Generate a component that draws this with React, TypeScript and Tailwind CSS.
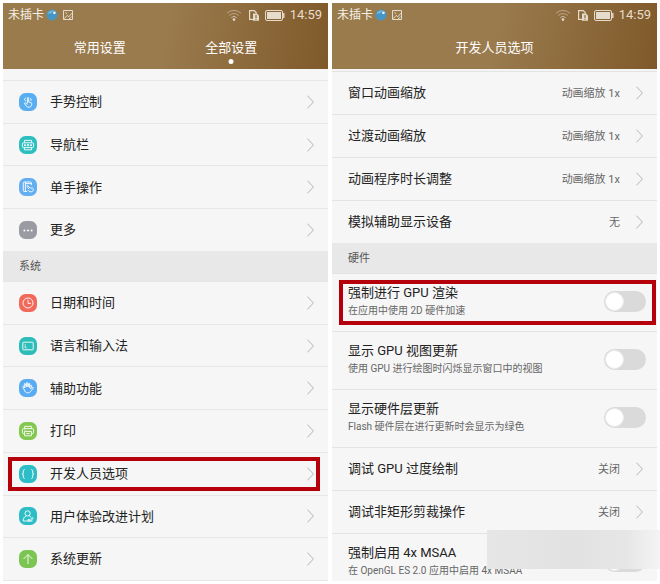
import React from 'react';

const tiles = {
  gesture: {
    color: '#58aef0',
    art: (
      <>
        <path d="M8.4 10.4V5.2c0-.9 1.3-.9 1.3 0v3.7l2.3.8c.7.2 1 .8.8 1.5l-.5 1.6c-.3.8-.9 1.3-1.7 1.3H9c-.6 0-1-.2-1.4-.7l-2-2.6c-.4-.6.3-1.2.9-.8l1.9 1.4" />
        <path d="M6.9 8.2c-1.6-.8-1.7-2.6-.2-3.6M11.4 5.2c.9.8 1 2 .2 2.8" />
      </>
    ),
  },
  navbar: {
    color: '#2dbfc0',
    art: (
      <>
        <path d="M5.4 6.8V4.4h7.2v2.4M5.4 11.6v2.2h7.2v-2.2" />
        <rect x="3.4" y="6.8" width="11.2" height="4.8" rx="1.2" />
        <path d="M5 9.2l1.3-.8V10zM8.3 8.5h1.4v1.4H8.3zM11.7 8.4l1.3.8-1.3.8z" />
      </>
    ),
  },
  onehand: {
    color: '#64aef2',
    art: (
      <>
        <path d="M12.4 7.2V4.9c0-.5-.3-.9-.8-.9H5.2c-.5 0-.9.4-.9.9v7.7c0 .5.4.9.9.9h3M6.4 4v9.5M6.4 5.6h6" />
        <path d="M8.4 7.4l2.8 2.6h1.8c1 .2 1.5.9 1.3 1.9-.2 1.2-1 1.9-2.2 1.9-1.4 0-2.5-.7-3.3-1.8M8.4 7.4c-.8.5-.4 1.2.1 1.8l1.4 1.8" />
      </>
    ),
  },
  more: {
    color: '#9a9aa2',
    art: (
      <g fill="#fff" stroke="none">
        <circle cx="5.4" cy="9.4" r="1" />
        <circle cx="9" cy="9.4" r="1" />
        <circle cx="12.6" cy="9.4" r="1" />
      </g>
    ),
  },
  clock: {
    color: '#f2695a',
    art: (
      <>
        <circle cx="9" cy="9" r="5" />
        <path d="M9 5.8v3.6h3" />
      </>
    ),
  },
  keyboard: {
    color: '#2cbdb9',
    art: (
      <>
        <rect x="3.8" y="5.2" width="10.4" height="7.6" rx=".6" />
        <path d="M6.2 7v.7M6.2 8.4v2.6M7.4 11h.8" />
      </>
    ),
  },
  hand: {
    color: '#5aacf2',
    art: (
      <path d="M5.2 10.6L3.8 8c-.3-.7.5-1.2 1-.6L6 9 5.3 5.2c0-.8.9-.9 1.1-.2L7.5 8l-.1-3.9c.1-.7 1-.7 1.1 0L9 7.9l.7-3.3c.2-.6 1-.5 1 .2l-.3 3.7 1.2-2.2c.4-.6 1.1-.2.9.4l-1 3.2c.9-1 1.7-1.6 2.6-1.4.5.2.4.6 0 .9l-1.9 2.3c-.9 1.4-1.8 2.2-3.4 2.2-1.8 0-2.8-1-3.6-3.3z" />
    ),
  },
  printer: {
    color: '#83c851',
    art: (
      <>
        <path d="M5.6 6.6V4.4h6.8v2.2M5.4 11.6h-.8c-.7 0-1.2-.4-1.2-1.1V7.7c0-.7.5-1.1 1.2-1.1h8.8c.7 0 1.2.4 1.2 1.1v2.8c0 .7-.5 1.1-1.2 1.1h-.8" />
        <path d="M5.6 9.4h6.8v4.4H5.6zM7.2 11.6h3.6M5.4 8h1" />
      </>
    ),
  },
  braces: {
    color: '#2cbdc6',
    art: (
      <path d="M5.7 4.6c-1 0-1.4.4-1.4 1.2V8c0 .6-.3 1-1.1 1 .8 0 1.1.4 1.1 1v2.2c0 .8.4 1.2 1.4 1.2M12.3 4.6c1 0 1.4.4 1.4 1.2V8c0 .6.3 1 1.1 1-.8 0-1.1.4-1.1 1v2.2c0 .8-.4 1.2-1.4 1.2" />
    ),
  },
  user: {
    color: '#2cbdc6',
    art: (
      <>
        <circle cx="8.6" cy="6.4" r="2.6" />
        <path d="M8.2 14H4.2c0-2.6 1.1-4.2 3-4.8M10.2 9c.8.2 1.4.6 1.8 1.1M8.8 13.8l.4-1.6 1.6.6 2.4-2.4 1 1-2.8 2.6zM8.2 14h5.4" />
      </>
    ),
  },
  update: {
    color: '#7cc552',
    art: <path d="M9 14V4.6M4.6 9L9 4.6 13.4 9" />,
  },
};

type TileName = keyof typeof tiles;

function Tile({ name }: { name: TileName }) {
  const { color, art } = tiles[name];
  return (
    <svg viewBox="0 0 18 18" className="size-[18px] shrink-0" fill="none" stroke="#fff" strokeWidth="0.9" strokeLinejoin="round" aria-hidden="true">
      <rect width="18" height="18" rx="6.5" fill={color} stroke="none" />
      {art}
    </svg>
  );
}

function Chevron() {
  return (
    <svg viewBox="0 0 7 14" className="h-3.5 w-[7px] shrink-0" fill="none" stroke="#b4b4b4" aria-hidden="true">
      <path d="M.4.6L6.4 7l-6 6.4" />
    </svg>
  );
}

function StatusBar() {
  return (
    <div className="flex h-6 items-center pl-[5px] pr-1.5 text-[#e6dccb]">
      <span className="text-xs text-[#f6f2ea]">未插卡</span>
      <svg viewBox="0 0 12 12" className="ml-0.5 size-3" aria-hidden="true">
        <circle cx="6" cy="6" r="5.4" fill="#4596c6" />
        <path d="M1.4 4.6C3 2 6 1 8.4 2c-2 .3-2.4 1.4-3.6 2.2-1 .7-2.2.2-3.4.4z" fill="#79bbdc" />
        <circle cx="8.4" cy="3.8" r="1.4" fill="#e4f2f8" />
      </svg>
      <svg viewBox="0 0 12 12" className="ml-1 size-3" fill="none" stroke="currentColor" aria-hidden="true">
        <path d="M1.5 1.5h9v9h-9zM2 9.8l3.2-3.4 1.6 1.4L10 4.2M3.4 3.6l1.8 1M7 10l2.6-2.2" />
      </svg>
      <svg viewBox="0 0 16 12" className="ml-auto h-3 w-4" fill="none" stroke="currentColor" aria-hidden="true">
        <path d="M1 4.2a10.2 10.2 0 0 1 14 0M3.2 6.5a7 7 0 0 1 9.6 0" opacity=".5" />
        <path d="M5.3 8.6a4 4 0 0 1 5.4 0" opacity=".7" />
        <circle cx="8" cy="10.6" r="1.3" fill="currentColor" stroke="none" />
      </svg>
      <svg viewBox="0 0 12 12" className="ml-1.5 size-3" aria-hidden="true">
        <path d="M5 10.4H1.6V1.6h4.6l2 2v1" fill="none" stroke="currentColor" strokeWidth="1.2" />
        <path d="M5 4.4h4l2 2v5.4H5z" fill="currentColor" />
        <path d="M8 6v3M8 9.8v1" stroke="#8d6b3b" strokeWidth="1.2" />
      </svg>
      <svg viewBox="0 0 20 11" className="ml-[5px] h-[11px] w-5" aria-hidden="true">
        <rect x=".5" y=".5" width="17" height="10" rx="1.5" fill="none" stroke="currentColor" />
        <rect x="2" y="2" width="14" height="7" fill="currentColor" />
        <path d="M18.8 3v5" stroke="currentColor" strokeWidth="1.4" />
      </svg>
      <span className="ml-[5px] text-[13px]">14:59</span>
    </div>
  );
}

function Phone({ header, children }: { header: React.ReactNode; children: React.ReactNode }) {
  return (
    <section className="flex min-h-0 flex-col overflow-hidden bg-[#f6f6f6]">
      <header className="shrink-0 bg-[linear-gradient(100deg,#9a7b4c_0%,#9a7b4e_50%,#7f592a_100%)]">
        <StatusBar />
        {header}
      </header>
      {children}
    </section>
  );
}

const generalItems: { icon: TileName; label: string }[] = [
  { icon: 'gesture', label: '手势控制' },
  { icon: 'navbar', label: '导航栏' },
  { icon: 'onehand', label: '单手操作' },
  { icon: 'more', label: '更多' },
];

const systemItems: { icon: TileName; label: string; marked?: boolean }[] = [
  { icon: 'clock', label: '日期和时间' },
  { icon: 'keyboard', label: '语言和输入法' },
  { icon: 'hand', label: '辅助功能' },
  { icon: 'printer', label: '打印' },
  { icon: 'braces', label: '开发人员选项', marked: true },
  { icon: 'user', label: '用户体验改进计划' },
  { icon: 'update', label: '系统更新' },
];

const animationItems = [
  { label: '窗口动画缩放', value: '动画缩放 1x' },
  { label: '过渡动画缩放', value: '动画缩放 1x' },
  { label: '动画程序时长调整', value: '动画缩放 1x' },
  { label: '模拟辅助显示设备', value: '无' },
];

const debugItems = [
  { label: '调试 GPU 过度绘制', value: '关闭' },
  { label: '调试非矩形剪裁操作', value: '关闭' },
];

function SectionTitle({ children }: { children: React.ReactNode }) {
  return (
    <h2 className="flex h-[30px] shrink-0 items-center bg-[#e8e8e8] px-4 pt-0.5 text-[11px] text-[#555]">{children}</h2>
  );
}

function MenuRow({ icon, label, marked }: { icon: TileName; label: string; marked?: boolean }) {
  return (
    <a href="#" className="relative flex flex-1 items-center border-t border-[#e6e6e6] pl-4 pr-3.5">
      <Tile name={icon} />
      <span className="ml-[13px] text-[13px] text-[#222]">{label}</span>
      <span className="ml-auto">
        <Chevron />
      </span>
      {marked && <span className="absolute inset-y-1 left-[5px] right-2 border-4 border-[#b5000c]" />}
    </a>
  );
}

function ValueRow({ label, value }: { label: string; value: string }) {
  return (
    <a href="#" className="flex h-[43px] shrink-0 items-center border-t border-[#e3e3e3] pl-4 pr-3.5">
      <span className="text-[13px] text-[#222]">{label}</span>
      <span className="ml-auto mr-4 pt-0.5 text-[11px] text-[#666]">{value}</span>
      <Chevron />
    </a>
  );
}

function SwitchRow({ id, label, hint, marked }: { id: string; label: string; hint: string; marked?: boolean }) {
  return (
    <div className="relative flex h-[58px] shrink-0 items-center border-t border-[#e3e3e3] pb-[3px] pl-4 pr-[11px]">
      <label htmlFor={id} className="flex flex-col">
        <span className="text-[13px] leading-5 text-[#222]">{label}</span>
        <span className="text-[10px] leading-4 text-[#666]">{hint}</span>
      </label>
      <input
        id={id}
        type="checkbox"
        role="switch"
        className="ml-auto h-[21px] w-[42px] shrink-0 appearance-none rounded-full bg-[#dadada] p-px before:block before:size-[19px] before:rounded-full before:border before:border-[#ececec] before:bg-white checked:bg-[#2cbdc6] checked:before:ml-auto"
      />
      {marked && <span className="pointer-events-none absolute inset-y-1.5 left-[7px] right-px border-4 border-[#b5000c]" />}
    </div>
  );
}

export default function App() {
  return (
    <main className="relative grid h-screen grid-cols-2 grid-rows-1 gap-1 overflow-hidden bg-white p-[3px] font-['Roboto','Noto_Sans_CJK_SC',sans-serif]">
      <Phone
        header={
          <nav className="grid h-[42px] grid-cols-2 px-[31px] text-[13px] text-white">
            <button>常用设置</button>
            <button className="relative">
              全部设置
              <span className="absolute bottom-[5px] left-1/2 size-[5px] -translate-x-1/2 rounded-full bg-white" />
            </button>
          </nav>
        }
      >
        <div className="flex flex-1 flex-col border-b border-[#e6e6e6] pt-[11px]">
          {generalItems.map((item) => (
            <MenuRow key={item.label} {...item} />
          ))}
          <SectionTitle>系统</SectionTitle>
          {systemItems.map((item) => (
            <MenuRow key={item.label} {...item} />
          ))}
        </div>
      </Phone>

      <Phone
        header={
          <h1 className="flex h-[42px] items-center justify-center text-[13px] text-white">开发人员选项</h1>
        }
      >
        <div className="flex min-h-0 flex-1 flex-col overflow-hidden pt-0.5">
          {animationItems.map((item) => (
            <ValueRow key={item.label} {...item} />
          ))}
          <SectionTitle>硬件</SectionTitle>
          <SwitchRow id="force-gpu" label="强制进行 GPU 渲染" hint="在应用中使用 2D 硬件加速" marked />
          <SwitchRow id="gpu-view" label="显示 GPU 视图更新" hint="使用 GPU 进行绘图时闪烁显示窗口中的视图" />
          <SwitchRow id="hw-layer" label="显示硬件层更新" hint="Flash 硬件层在进行更新时会显示为绿色" />
          {debugItems.map((item) => (
            <ValueRow key={item.label} {...item} />
          ))}
          <SwitchRow id="msaa" label="强制启用 4x MSAA" hint="在 OpenGL ES 2.0 应用中启用 4x MSAA" />
        </div>
      </Phone>

      {/* 右下角遮挡块 */}
      <div className="pointer-events-none absolute bottom-[15px] right-0 h-[39px] w-[173px] bg-[linear-gradient(90deg,#e6e6e6_0%,#e2e2e2_50%,#e6e6e6_80%,#f4f4f4_100%)]" />
    </main>
  );
}
